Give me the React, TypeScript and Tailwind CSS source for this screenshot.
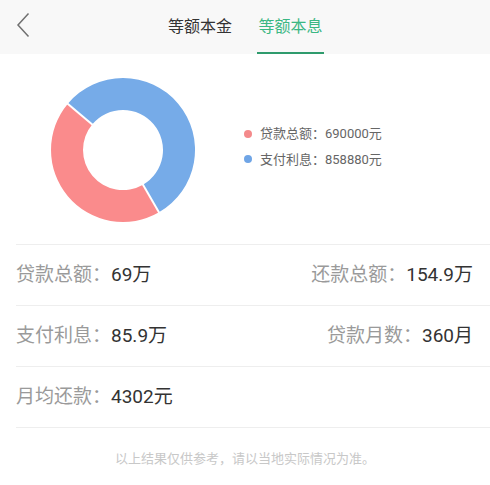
import React from 'react';

const FONT = { fontFamily: '"Noto Sans CJK SC", "Noto Sans", sans-serif' };
const NUM_FONT = { fontFamily: 'Roboto, "Noto Sans CJK SC", sans-serif' };

// donut geometry: angles clockwise from top, split at 150° and 310°
const OUT1 = '17.85 26.72';
const IN1 = '42.36 47.29';
const OUT2 = '109 135.35';
const IN2 = '93 107.64';

function Donut() {
  return (
    <svg width="146" height="146" viewBox="0 0 146 146">
      <path d={`M${OUT1} A72 72 0 1 1 ${OUT2} L${IN2} A40 40 0 1 0 ${IN1} Z`} fill="#76abe8" />
      <path d={`M${OUT2} A72 72 0 0 1 ${OUT1} L${IN1} A40 40 0 0 0 ${IN2} Z`} fill="#fa8b8c" />
      <line x1="44" y1="49" x2="15" y2="24.5" stroke="#fff" strokeWidth="2" />
      <line x1="92" y1="105.9" x2="110.5" y2="138" stroke="#fff" strokeWidth="2" />
    </svg>
  );
}

const ROWS = [
  [
    { label: '贷款总额：', value: '69万' },
    { label: '还款总额：', value: '154.9万' },
  ],
  [
    { label: '支付利息：', value: '85.9万' },
    { label: '贷款月数：', value: '360月' },
  ],
  [{ label: '月均还款：', value: '4302元' }],
];

export default function App() {
  return (
    <div className="w-[490px] h-[485px] bg-white overflow-hidden" style={FONT}>
      <header className="h-[54px] bg-[#f8f8f8] flex items-stretch relative">
        <button className="absolute left-[14px] top-[11px] w-[18px] h-[28px] flex items-center justify-center">
          <svg width="14" height="26" viewBox="0 0 14 26" fill="none">
            <path d="M12.5 1.5 L2 13 L12.5 24.5" stroke="#707070" strokeWidth="1.5" />
          </svg>
        </button>
        <div className="flex-1 flex justify-center gap-[24px] pl-[1px]">
          <div className="flex flex-col items-center justify-center pb-[2px] text-[16px] text-[#333] w-[66px] border-b-2 border-transparent">
            等额本金
          </div>
          <div className="flex flex-col items-center justify-center pb-[2px] text-[16px] text-[#3bb783] w-[67px] border-b-2 border-[#2f9b6d]">
            等额本息
          </div>
        </div>
      </header>

      <section className="h-[191px] ml-4 border-b border-[#eeeeee] flex items-start">
        <div className="mt-[23px] ml-[34px]">
          <Donut />
        </div>
        <div className="ml-[48px] mt-[70px] flex flex-col gap-[6px] text-[13px] text-[#666]" style={NUM_FONT}>
          <div className="flex items-center gap-[8px]">
            <span className="w-[8px] h-[8px] rounded-full bg-[#f48a8b]" />
            <span>贷款总额：690000元</span>
          </div>
          <div className="flex items-center gap-[8px]">
            <span className="w-[8px] h-[8px] rounded-full bg-[#6fa5e6]" />
            <span>支付利息：858880元</span>
          </div>
        </div>
      </section>

      {ROWS.map((row, i) => (
        <div
          key={i}
          className="h-[61px] ml-4 pr-[17px] border-b border-[#eeeeee] flex items-center justify-between text-[19px]"
          style={NUM_FONT}
        >
          {row.map((item) => (
            <div key={item.label} className="flex items-center">
              <span className="text-[#9a9a9a]">{item.label}</span>
              <span className="text-[#333]">{item.value}</span>
            </div>
          ))}
        </div>
      ))}

      <p className="text-center text-[13px] text-[#c8c8c8] mt-[20px]">以上结果仅供参考，请以当地实际情况为准。</p>
    </div>
  );
}
